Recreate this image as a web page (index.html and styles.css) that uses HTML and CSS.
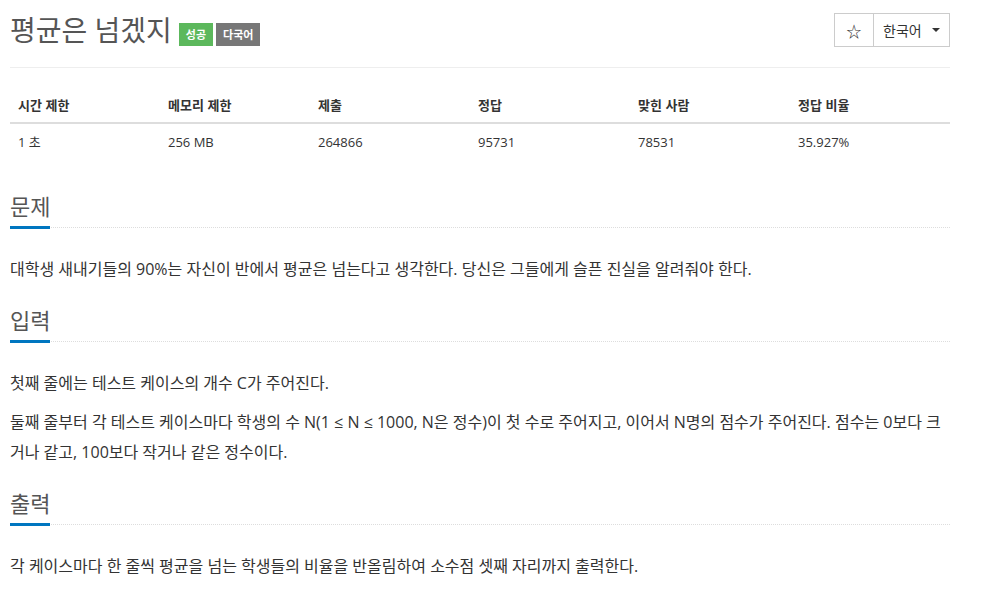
FILE: index.html
```html
<!DOCTYPE html>
<html lang="ko">
<head>
<meta charset="utf-8">
<link rel="stylesheet" href="styles.css">
</head>
<body>
<div class="page">
  <header class="head">
    <h1 class="title">평균은 넘겠지<span class="badge green">성공</span><span class="badge gray">다국어</span></h1>
    <div class="btn-group">
      <span class="btn star">☆</span>
      <span class="btn lang">한국어 <span class="caret"></span></span>
    </div>
  </header>

  <table class="info">
    <thead>
      <tr><th class="c1">시간 제한</th><th class="c2">메모리 제한</th><th class="c3">제출</th><th class="c4">정답</th><th class="c5">맞힌 사람</th><th class="c6">정답 비율</th></tr>
    </thead>
    <tbody>
      <tr><td>1 초</td><td>256 MB</td><td>264866</td><td>95731</td><td>78531</td><td>35.927%</td></tr>
    </tbody>
  </table>

  <section class="sec">
    <div class="sec-head"><h2>문제</h2></div>
    <p>대학생 새내기들의 90%는 자신이 반에서 평균은 넘는다고 생각한다. 당신은 그들에게 슬픈 진실을 알려줘야 한다.</p>
  </section>

  <section class="sec">
    <div class="sec-head"><h2>입력</h2></div>
    <p>첫째 줄에는 테스트 케이스의 개수 C가 주어진다.</p>
    <p>둘째 줄부터 각 테스트 케이스마다 학생의 수 N(1 ≤ N ≤ 1000, N은 정수)이 첫 수로 주어지고, 이어서 N명의 점수가 주어진다. 점수는 0보다 크거나 같고, 100보다 작거나 같은 정수이다.</p>
  </section>

  <section class="sec">
    <div class="sec-head"><h2>출력</h2></div>
    <p>각 케이스마다 한 줄씩 평균을 넘는 학생들의 비율을 반올림하여 소수점 셋째 자리까지 출력한다.</p>
  </section>
</div>
</body>
</html>
```

FILE: styles.css
```css
* { box-sizing: border-box; }
body {
  margin: 0;
  background: #fff;
  font-family: "Open Sans", "Noto Sans CJK KR", sans-serif;
  color: #333;
  font-size: 14px;
}
.page {
  width: 960px;
  padding: 0 10px;
}
.head {
  display: flex;
  justify-content: space-between;
  align-items: flex-start;
  border-bottom: 1px solid #eee;
  height: 68px;
}
.title {
  margin: 0;
  padding-top: 10px;
  font-size: 28px;
  font-weight: 400;
  color: #555;
  line-height: 40px;
  display: flex;
  align-items: center;
}
.badge {
  display: inline-block;
  font-size: 11px;
  font-weight: 700;
  color: #fff;
  height: 23px;
  line-height: 23px;
  padding: 0 7px;
  margin-top: 8px;
}
.badge.green { background: #5cb85c; margin-left: 7px; }
.badge.gray { background: #777; margin-left: 3px; }
.btn-group {
  display: flex;
  margin-top: 13px;
}
.btn {
  display: flex;
  align-items: center;
  height: 34px;
  border: 1px solid #ccc;
  font-size: 14px;
  color: #333;
}
.star {
  width: 40px;
  justify-content: center;
  font-size: 15px;
}
.lang {
  border-left: 0;
  width: 76px;
  padding-left: 9px;
  font-family: "Noto Sans CJK KR", sans-serif;
}
.caret {
  display: inline-block;
  width: 0;
  height: 0;
  border-left: 4px solid transparent;
  border-right: 4px solid transparent;
  border-top: 4px solid #333;
  margin-left: 10px;
}
.info {
  width: 940px;
  border-collapse: collapse;
  margin-top: 20px;
  margin-bottom: 32px;
  font-size: 13px;
}
.info th {
  text-align: left;
  font-weight: 700;
  padding: 7px 8px 8px;
  border-bottom: 2px solid #ddd;
  height: 34px;
  font-family: "Noto Sans CJK KR", sans-serif;
}
.info td {
  padding: 8px 8px;
  height: 36px;
}
.c1, .c2 { width: 150px; }
.c3, .c4, .c5, .c6 { width: 160px; }
.sec { margin-top: 21px; }
.sec-head {
  display: flex;
  border-bottom: 1px dotted #ddd;
}
.sec-head h2 {
  margin: 0 0 -2px;
  font-size: 22px;
  font-weight: 400;
  color: #555;
  line-height: 30px;
  padding-bottom: 5px;
  border-bottom: 3px solid #0076c0;
}
.sec p {
  margin: 26px 0 0;
  font-size: 16px;
  line-height: 30px;
}
.sec p + p { margin-top: 9px; }
```
